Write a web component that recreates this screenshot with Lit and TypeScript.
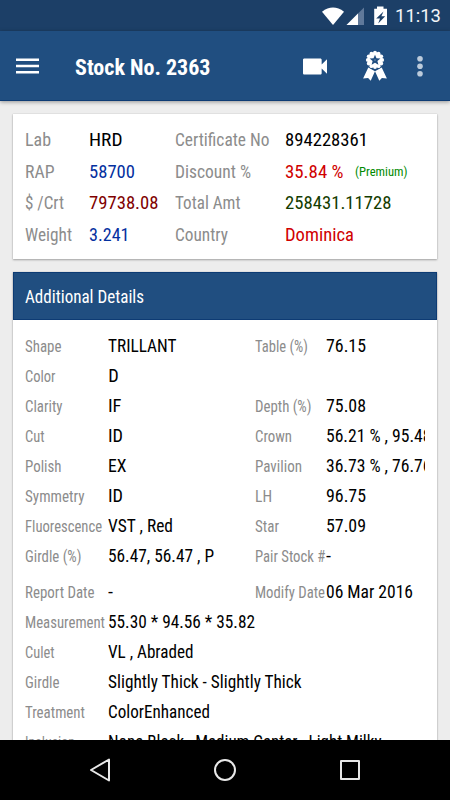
import { LitElement, html, css, svg } from "lit";
import { customElement, property } from "lit/decorators.js";

/* Text squeezed horizontally to a given advance width. */
@customElement("fit-text")
class FitText extends LitElement {
  @property({ type: Number }) w = 0;
  @property() text = "";
  static styles = css`
    :host { display: inline-block; white-space: pre; }
    .t { display: inline-block; transform-origin: 0 50%; }
  `;
  updated() {
    const t = this.renderRoot.querySelector(".t") as HTMLElement;
    t.style.transform = "none";
    const natural = t.getBoundingClientRect().width;
    if (this.w && natural) {
      t.style.transform = `scaleX(${this.w / natural})`;
      this.style.width = this.w + "px";
    }
  }
  render() {
    return html`<span class="t">${this.text}</span>`;
  }
}

type Cell = [string, number, string?];

const summary: [Cell, Cell, Cell, Cell, Cell?][] = [
  [["Lab", 26], ["HRD", 33.5], ["Certificate No", 94.5], ["894228361", 83]],
  [["RAP", 29.5], ["58700", 46, "blue"], ["Discount %", 76], ["35.84 %", 58.5, "red"], ["(Premium)", 52.5, "note"]],
  [["$ /Crt", 39], ["79738.08", 69.5, "maroon"], ["Total Amt", 65.5], ["258431.11728", 106.5, "green"]],
  [["Weight", 47], ["3.241", 40.5, "blue"], ["Country", 53], ["Dominica", 69, "red"]],
];

const details: [Cell, Cell, Cell?, Cell?][] = [
  [["Shape", 36.5], ["TRILLANT", 68.5], ["Table (%)", 53], ["76.15", 40]],
  [["Color", 30.5], ["D", 10.5]],
  [["Clarity", 37.5], ["IF", 13.5], ["Depth (%)", 56.5], ["75.08", 40]],
  [["Cut", 19.5], ["ID", 15], ["Crown", 37], ["56.21 % , 95.48", 105.5]],
  [["Polish", 36.5], ["EX", 18.5], ["Pavilion", 47], ["36.73 % , 76.76", 105.5]],
  [["Symmetry", 59.5], ["ID", 15], ["LH", 17], ["96.75", 40]],
  [["Fluorescence", 77], ["VST , Red", 65], ["Star", 24], ["57.09", 40]],
  [["Girdle (%)", 56.5], ["56.47, 56.47 , P", 106], ["Pair Stock #", 70.3], ["-", 5]],
];

const more: [Cell, Cell, Cell?, Cell?][] = [
  [["Report Date", 69.5], ["-", 5], ["Modify Date", 70], ["06 Mar 2016", 87]],
  [["Measurement", 80], ["55.30 * 94.56 * 35.82", 147]],
  [["Culet", 29.5], ["VL , Abraded", 85.5]],
  [["Girdle", 34.5], ["Slightly Thick - Slightly Thick", 193.5]],
  [["Treatment", 60], ["ColorEnhanced", 102]],
  [["Inclusion", 50], ["None Black , Medium Center , Light Milky", 273.5]],
];

const scallops = Array.from({ length: 12 }, (_, i) => {
  const a = (i * Math.PI) / 6;
  return svg`<circle cx=${12.5 + 7.2 * Math.cos(a)} cy=${8.9 + 7.2 * Math.sin(a)} r="1.9"/>`;
});

@customElement("app-root")
class AppRoot extends LitElement {
  static styles = css`
    * { box-sizing: border-box; }
    :host {
      display: flex; flex-direction: column; width: 450px; height: 800px; overflow: hidden;
      background: #ededed; color: #000; font-family: "Roboto Condensed", Roboto, sans-serif;
      font-stretch: 75%; font-size: 18.4px;
    }
    svg { display: block; flex: none; }
    .status { height: 31px; flex: none; background: #1c3f67; display: flex; justify-content: flex-end; align-items: center; padding: 1px 9px 0 0; color: #fff; }
    .time { font: 18px/30px Roboto, sans-serif; font-stretch: 100%; color: #f4f6f8; }
    .bar { height: 70px; flex: none; background: #204e80; border-bottom: 1px solid #0d3b74; display: flex; align-items: center; padding: 1px 23px 0 16px; color: #fff; box-shadow: 0 1px 4px rgba(0,0,0,.38); z-index: 1; }
    .title { font-size: 22.5px; font-weight: 700; margin: 2px 0 0 35.7px; flex: 1; }
    .main { flex: 1; min-height: 0; overflow: hidden; padding: 13px 13px 0; }
    .card { background: #fff; box-shadow: 0 1px 2px rgba(0,0,0,.3), 0 0 1px rgba(0,0,0,.2); }
    .summary { height: 145px; padding: 10px 0 0 11.7px; margin-bottom: 13px; }
    .row { display: grid; align-items: baseline; }
    .summary .row { grid-template-columns: 64px 86px 110.2px auto 1fr; height: 31.67px; line-height: 32px; }
    .head { height: 48px; background: #204e80; border: 1px solid #0d3b74; color: #fff; padding-left: 11px; line-height: 47px; }
    .body { padding: 11px 12px 0 11.7px; }
    .body .row { grid-template-columns: 83.6px 147px 70.6px 1fr; height: 30px; line-height: 30px; }
    .body .row > * { min-width: 0; }
    .body .row.wide { grid-template-columns: 83.6px 1fr; }
    .clip { overflow: hidden; overflow: clip; white-space: nowrap; }
    .more { margin-top: 6px; }
    .label { color: #8c8c8c; }
    .body .label { font-size: 15.8px; }
    .blue { color: #0430a0; } .red { color: #d00000; } .maroon { color: #800000; } .green { color: #143c00; }
    .note { color: #008a00; font-size: 13.3px; margin-left: 11.5px; position: relative; top: -2px; }
    .nav { height: 60px; flex: none; background: #000; display: flex; justify-content: space-between; align-items: center; padding: 0 85px; z-index: 1; }
  `;
  cell(c: Cell | undefined, label = false) {
    if (!c) return "";
    return html`<div class="clip ${label ? "label" : ""} ${c[2] ?? ""}"><fit-text .text=${c[0]} .w=${c[1]}></fit-text></div>`;
  }
  rows(list: [Cell, Cell, Cell?, Cell?][]) {
    return list.map(r => html`<div class="row ${r[2] ? "" : "wide"}">
      ${this.cell(r[0], true)}${this.cell(r[1])}${this.cell(r[2], true)}${this.cell(r[3])}
    </div>`);
  }
  render() {
    return html`
      <div class="status">
        <svg width="74" height="30" viewBox="321 0 74 30" fill="#fff">
          <path d="M322 10.7Q333 2.3 344 10.7L333 24.1Z"/>
          <path d="M364 6.5V24.1H346.5Z" fill="#60799a"/><path d="M358 12.5V24.1H346.5Z"/>
          <path fill-rule="evenodd" d="M377 5.5h6.5v2.2H387V24.1H374.2V7.7H377ZM383.5 10.5l-7.3 7h3.8l-1.8 5 7-7.3h-3.8Z"/>
        </svg>
        <div class="time"><fit-text .text=${"11:13"} .w=${46}></fit-text></div>
      </div>
      <div class="bar">
        <svg width="23" height="16" viewBox="0 0 23 16" fill="#fff"><path d="M0 .5h23v2.6H0zM0 6.7h23v2.6H0zM0 12.9h23v2.6H0z"/></svg>
        <div class="title"><fit-text .text=${"Stock No. 2363"} .w=${135.5}></fit-text></div>
        <svg width="130" height="40" viewBox="297 46 130 40" fill="#fff">
          <path transform="translate(299 50.5) scale(1.333)" d="M17 10.5V7c0-.55-.45-1-1-1H4c-.55 0-1 .45-1 1v10c0 .55.45 1 1 1h12c.55 0 1-.45 1-1v-3.5l4 4v-11l-4 4z"/>
          <g transform="translate(362.5 51)">
            <path d="M5.8 16.6L12.5 20.2 8.2 29.7 5.6 26.9.6 27.6ZM19.2 16.6L12.5 20.2 16.8 29.7 19.4 26.9 24.4 27.6Z"/>
            <circle cx="12.5" cy="8.9" r="9.6" fill="#204e80"/>
            <circle cx="12.5" cy="8.9" r="7.6"/>${scallops}
            <path fill="#204e80" d="M12.5 3.7l1.5 3.5 3.9.3-3 2.5 1 3.8-3.4-2-3.4 2 1-3.8-3-2.5 3.9-.3z"/>
            <circle cx="12.5" cy="9.1" r=".8" fill="#6f8fb2"/>
          </g>
          <g fill="#bccbdb"><circle cx="420" cy="58.8" r="2.8"/><circle cx="420" cy="66.3" r="2.8"/><circle cx="420" cy="73.8" r="2.8"/></g>
        </svg>
      </div>
      <div class="main">
        <div class="card summary">
          ${summary.map(r => html`<div class="row">
            ${this.cell(r[0], true)}${this.cell(r[1])}${this.cell(r[2], true)}${this.cell(r[3])}${this.cell(r[4])}
          </div>`)}
        </div>
        <div class="card">
          <div class="head"><fit-text .text=${"Additional Details"} .w=${119}></fit-text></div>
          <div class="body">
            ${this.rows(details)}
            <div class="more">${this.rows(more)}</div>
          </div>
        </div>
      </div>
      <div class="nav">
        <svg width="280" height="30" viewBox="85 755 280 30" fill="none" stroke="#e8e8e8" stroke-width="2" stroke-linejoin="round">
          <path d="M109 759.5V780.5L91 770Z"/><circle cx="225" cy="770" r="10"/><rect x="341" y="761" width="18" height="18"/>
        </svg>
      </div>`;
  }
}
